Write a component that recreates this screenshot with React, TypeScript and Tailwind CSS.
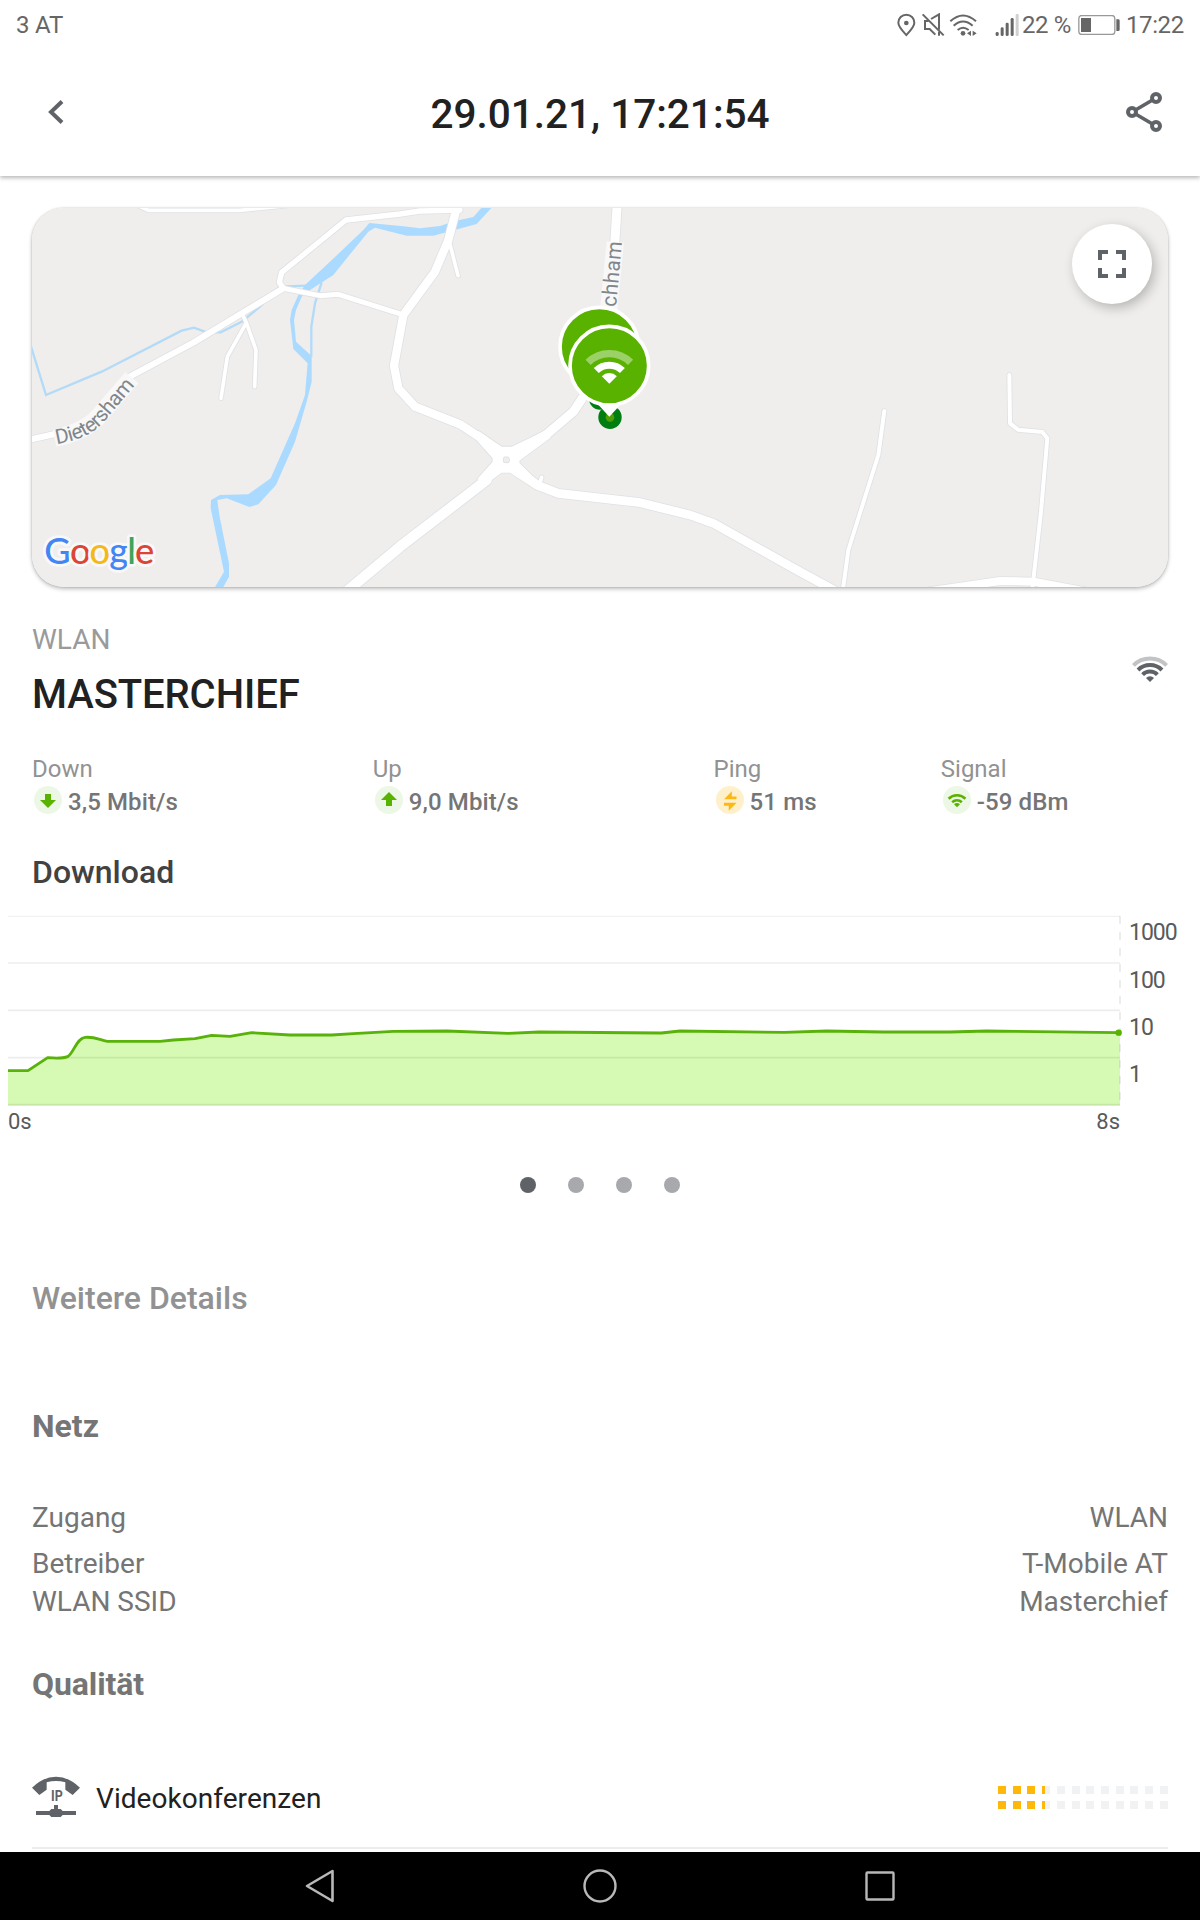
import React from "react";

const MAJOR = [
  { d: "M1315 20L1285 135L1245 230L1150 360L1122 512L1135 580L1185 635L1320 688L1395 737L1440 772", w: 25 },
  { d: "M1470 780L1580 718L1660 650L1700 590L1740 500L1770 380L1792 20", w: 27 },
  { d: "M1400 855L1140 1055L985 1185", w: 31 },
  { d: "M1485 820L1555 872L1615 895L1855 922L2010 960L2080 985L2340 1130L2450 1190", w: 26 },
  { d: "M20 736L105 717L205 690L325 547L520 443L790 280", w: 18 },
  { d: "M790 280L778 262L785 232L978 75L1140 57L1200 48L1320 45", w: 16 },
  { d: "M790 280L900 302L955 298L1145 358", w: 15 },
  { d: "M340 25L385 46L660 46L820 30", w: 11 },
  { d: "M2720 1190L2940 1158L3040 1160L3200 1190", w: 24 },
  { d: "M1288 140L1314 242", w: 11 },
  { d: "M668 360L680 385L708 465L704 575M678 385L622 485L603 610", w: 11 },
  { d: "M1558 868L1565 847", w: 11 },
  { d: "M2593 648L2575 780L2485 1065L2468 1190", w: 12 },
  { d: "M2968 540L2970 685L2994 704L3067 711L3082 730L3063 950L3036 1190", w: 12 },
];

const ROUNDABOUT =
  "M1375 707L1445 755L1475 755L1580 705L1592 728L1498 797L1499 805L1556 862L1545 882L1470 833L1445 833L1395 870L1372 852L1418 800L1418 790L1372 738Z";

const RIVER =
  "M1048 84L1150 94L1200 100L1260 93L1305 78L1360 66L1392 30L1422 30L1370 87L1240 122L1160 122L1065 98L1045 110L972 200L940 240L870 285L845 305L828 345L822 375L828 440L875 483L875 560L860 620L825 740L768 870L715 928L688 936L620 910L592 915L598 960L627 1105L627 1145L605 1185L580 1185L612 1130L572 940L573 915L600 900L685 898L752 850L825 685L855 600L863 505L820 462L810 375L815 345L835 300L855 270L925 205L1030 105Z";

const LABEL = "font-['Roboto',sans-serif] fill-[#80868b]";

function MapView() {
  return (
    <svg className="block h-full w-full" viewBox="36 39 3408 1137" preserveAspectRatio="none">
      <rect x="36" y="39" width="3408" height="1137" fill="#efeeec" />
      <g fill="none" stroke="#b3dbf8" strokeWidth="7">
        <path d="M30 445L78 600L245 530L485 407L522 398L560 412L602 412L665 380L720 335L780 275L860 272" />
        <path d="M905 262L885 325L874 395L874 485" />
      </g>
      <path d={RIVER} fill="#aadaff" />
      <g fill="none" stroke="#dfe1e4" strokeLinecap="round" strokeLinejoin="round">
        {MAJOR.map((r) => (
          <path key={r.d} d={r.d} strokeWidth={r.w + 5} />
        ))}
        <path d={ROUNDABOUT} strokeWidth="5" />
      </g>
      <g fill="none" stroke="#fff" strokeLinecap="round" strokeLinejoin="round">
        {MAJOR.map((r) => (
          <path key={r.d} d={r.d} strokeWidth={r.w} />
        ))}
      </g>
      <path d={ROUNDABOUT} fill="#fff" />
      <rect x="1450" y="786" width="18" height="17" rx="5" fill="#efeeec" stroke="#dfe1e4" strokeWidth="3" />

      <g fill="none" stroke="#f8f8f8" strokeWidth="52" strokeLinejoin="round">
        <path d="M104 730C150 720 200 704 236 664L336 548" />
        <path d="M1764 364L1786 141" />
      </g>
      <path id="dietersham" d="M110 747C165 738 215 722 252 680L390 518" fill="none" />
      <path id="schham" d="M1785 370L1808 118" fill="none" />
      <text className={LABEL} fontSize="62">
        <textPath href="#dietersham" textLength="304">Dietersham</textPath>
      </text>
      <text className={LABEL} fontSize="63">
        <textPath href="#schham" textLength="230">schham</textPath>
      </text>

      <circle cx="1740" cy="611" r="33" fill="#007e12" />
      <circle cx="1738" cy="455" r="118" fill="#59b200" stroke="#fff" strokeWidth="11" />
      <circle cx="1770" cy="667" r="35" fill="#007e12" />
      <circle cx="1770" cy="667" r="13" fill="#4fa007" />
      <path d="M1728 622L1768 665L1808 622Z" fill="#fff" />
      <circle cx="1768" cy="512" r="118" fill="#59b200" stroke="#fff" strokeWidth="11" />
      <g fill="none" stroke="#fff">
        <path d="M1704.4 502.4A90 90 0 0 1 1831.6 502.4" strokeWidth="22" opacity=".4" />
        <path d="M1728.8 526.8A55.5 55.5 0 0 1 1807.2 526.8" strokeWidth="21" />
      </g>
      <path d="M1768 566L1745.5 543.5A32 32 0 0 1 1790.5 543.5Z" fill="#fff" />

      <text
        x="73"
        y="1107"
        className="font-['Lato',sans-serif] stroke-[#f8f8f8] [paint-order:stroke] [stroke-linejoin:round]"
        fontSize="109"
        fontWeight="500"
        strokeWidth="17"
        textLength="330"
      >
        <tspan fill="#4285f4">G</tspan>
        <tspan fill="#db4437">o</tspan>
        <tspan fill="#f4b919">o</tspan>
        <tspan fill="#4285f4">g</tspan>
        <tspan fill="#3fa35b">l</tspan>
        <tspan fill="#db4437">e</tspan>
      </text>
    </svg>
  );
}

function StatusBar() {
  return (
    <div className="relative z-20 flex h-12 shrink-0 items-center justify-between bg-white px-4 pt-px text-2xl leading-[48px] text-[#666]">
      <span className="tracking-[-0.2px]">3 AT</span>
      <div className="flex items-center">
        <svg width="80" height="24" viewBox="50 36 240 72" fill="none" stroke="#666" strokeWidth="6">
          <path d="M78 102C66 89 54 77 54 65a24 24 0 0 1 48 0C102 77 90 89 78 102Z" />
          <circle cx="78" cy="66" r="7" fill="#666" stroke="none" />
          <path d="M127 40L190 103" />
          <path d="M145 60h-11v24h14l17 17M152 54L176 40v46M176 92v12" strokeWidth="6" />
          <path d="M210 61Q248 26 287 61M220 74Q248 49 277 74M232 87Q248 73 265 87" />
          <circle cx="248" cy="97" r="7" fill="#666" stroke="none" />
          <path d="M272 89v16l-12-8zM277 89v16l12-8z" fill="#666" stroke="none" />
        </svg>
        <svg className="ml-[18px]" width="24" height="22" viewBox="343 39 72 66" fill="#666">
          <rect x="345" y="93" width="9" height="12" rx="4" />
          <rect x="360" y="79" width="9" height="26" rx="4" />
          <rect x="375" y="65" width="9" height="40" rx="4" />
          <rect x="390" y="51" width="9" height="54" rx="4" />
          <rect x="405" y="39" width="9" height="66" rx="3" fill="#d0d0d0" />
        </svg>
        <span className="ml-[3px] w-[50px] whitespace-nowrap tracking-[-0.4px]">22 %</span>
        <svg className="ml-1.5" width="42" height="20" viewBox="593 42 126 60" fill="none">
          <rect x="595.5" y="43.5" width="108" height="57" rx="9" stroke="#999" strokeWidth="4" />
          <rect x="602" y="51" width="30" height="42" fill="#666" />
          <path d="M708 55h6a4 4 0 0 1 4 4v27a4 4 0 0 1-4 4h-6z" fill="#666" />
        </svg>
        <span className="ml-1.5 w-[58px] whitespace-nowrap tracking-[-0.4px]">17:22</span>
      </div>
    </div>
  );
}

function Header() {
  return (
    <header className="z-10 flex h-32 shrink-0 items-center justify-between bg-white pl-12 pr-[38px] shadow-[0_2px_4px_rgba(0,0,0,0.28)]">
      <svg width="16" height="24" viewBox="0 0 16 24" fill="none" stroke="#5f6368" strokeWidth="4">
        <path d="M14 1.5L3 12L14 22.5" />
      </svg>
      <h1 className="pl-[10px] pt-[4px] text-[40.500px] font-medium leading-[48px] text-[#212121]">29.01.21, 17:21:54</h1>
      <svg width="36" height="40" viewBox="0 0 36 40" fill="none" stroke="#5f6368" strokeWidth="4">
        <circle cx="6" cy="20" r="4" />
        <circle cx="30" cy="6" r="4" />
        <circle cx="30" cy="34" r="4" />
        <path d="M9.5 18L26.5 8M9.5 22L26.5 32" strokeWidth="3.6" />
      </svg>
    </header>
  );
}

function Bubble({ tone, children }: { tone: string; children: React.ReactNode }) {
  return (
    <svg className="shrink-0" width="28" height="28" viewBox="0 0 28 28">
      <circle cx="14" cy="14" r="14" fill={tone} />
      {children}
    </svg>
  );
}

const STATS = [
  {
    label: "Down",
    value: "3,5 Mbit/s",
    icon: (
      <Bubble tone="#edf7e5">
        <path d="M11 8h6v6h5l-8 8l-8-8h5z" fill="#59b200" />
      </Bubble>
    ),
  },
  {
    label: "Up",
    value: "9,0 Mbit/s",
    icon: (
      <Bubble tone="#edf7e5">
        <path d="M11 20h6v-6h5l-8-8l-8 8h5z" fill="#59b200" />
      </Bubble>
    ),
  },
  {
    label: "Ping",
    value: "51 ms",
    icon: (
      <Bubble tone="#fff0cc">
        <path d="M8 13.300L15.800 5.200V10.400H20.500V13.300ZM20.500 16.800L12.700 24.800V19.700H8V16.800Z" fill="#fdb813" />
      </Bubble>
    ),
  },
  {
    label: "Signal",
    value: "-59 dBm",
    icon: (
      <Bubble tone="#edf7e5">
        <g fill="none" stroke="#59b200" strokeWidth="2.600">
          <path d="M5.600 12.700A12 12 0 0 1 22.400 12.700" />
          <path d="M9.200 16.200A7 7 0 0 1 18.800 16.200" />
        </g>
        <path d="M14 21.300l-3-3a4.200 4.200 0 0 1 6 0z" fill="#59b200" />
      </Bubble>
    ),
  },
];

function Stats() {
  return (
    <div className="mt-[30px] grid grid-cols-[3fr_3fr_2fr_2fr]">
      {STATS.map((s) => (
        <div key={s.label}>
          <div className="h-8 text-2xl leading-[34px] text-[#929292]">{s.label}</div>
          <div className="flex h-8 items-center gap-1.5 pl-0.5">
            {s.icon}
            <span className="pt-[3px] text-2xl font-medium leading-8 tracking-[0.1px] text-[#757575]">{s.value}</span>
          </div>
        </div>
      ))}
    </div>
  );
}

const CURVE =
  "M24 512H84L143 473Q185 477 203 470C222 458 230 414 255 412C285 409 300 421 322 424H480L520 420L585 416L635 406L690 409L755 398L870 405H995L1060 401L1180 394L1341 393L1525 400L1617 396L1984 399L2040 393L2352 397L2480 393L2650 396H2850L2960 393L3355 398";

function Chart() {
  return (
    <section className="mt-4 px-2">
      <div className="flex gap-[7px]">
        <svg className="mt-[7px] block" width="1114" height="191" viewBox="24 45 3342 573">
          <path d={CURVE + "L3360 398V617H24Z"} fill="#d6f9b3" />
          <g fill="none" stroke="#000" strokeOpacity=".07">
            <path d="M24 49H3360" strokeWidth="3" />
            <path d="M24 189H3360M24 331H3360M24 473H3360M24 614H3360" strokeWidth="5" />
            <path d="M3360 48V612" strokeWidth="6" strokeDasharray="24 24" />
          </g>
          <path d={CURVE} fill="none" stroke="#58b20a" strokeWidth="8.500" strokeLinejoin="round" />
          <circle cx="3356" cy="398" r="9.500" fill="#59b200" />
        </svg>
        <div className="pt-0.5 text-[23px] text-[#5a5a5a]">
          {["1000", "100", "10", "1"].map((t) => (
            <div key={t} className="flex h-[47.300px] items-center tracking-[-1px]">
              {t}
            </div>
          ))}
        </div>
      </div>
      <div className="flex h-7 w-[1112px] items-center justify-between pt-[3px] text-[22px] text-[#5a5a5a]">
        <span>0s</span>
        <span>8s</span>
      </div>
    </section>
  );
}

function Row({ name, value }: { name: string; value: string }) {
  return (
    <div className="flex h-[38px] items-center justify-between text-[28px] leading-[38px] text-[#757575]">
      <span>{name}</span>
      <span>{value}</span>
    </div>
  );
}

function Rating() {
  const cells = Array.from({ length: 12 }, (_, i) => i);
  return (
    <div className="flex w-[170px] flex-col gap-[7px]">
      {[0, 1].map((r) => (
        <div key={r} className="flex justify-between">
          {cells.map((i) => (
            <div key={i} className={i < 3 ? "h-2 w-2 bg-[#ffb80a]" : "flex h-2 w-2 bg-[#f1f2f4]"}>
              {i === 3 && <div className="h-2 w-[3px] bg-[#ffb80a]" />}
            </div>
          ))}
        </div>
      ))}
    </div>
  );
}

export default function App() {
  return (
    <div className="flex h-[1920px] w-[1200px] flex-col overflow-hidden bg-white font-['Roboto',sans-serif]">
      <StatusBar />
      <Header />
      <main className="flex min-h-0 flex-1 flex-col overflow-hidden">
        <div className="px-8 pt-8">
          <div className="relative h-[379px] rounded-[32px] shadow-[0_2px_4px_rgba(0,0,0,0.26),0_0_2px_rgba(0,0,0,0.2)]">
            <div className="h-full overflow-hidden rounded-[32px]">
              <MapView />
            </div>
            <button className="absolute right-4 top-4 flex h-20 w-20 items-center justify-center rounded-full bg-white shadow-[3px_4px_12px_rgba(0,0,0,0.24)]">
              <svg width="28" height="28" viewBox="0 0 28 28" fill="none" stroke="#5f6368" strokeWidth="4">
                <path d="M2 10V2H10M18 2H26V10M26 18V26H18M10 26H2V18" />
              </svg>
            </button>
          </div>

          <div className="mt-8 flex justify-between">
            <div>
              <div className="h-10 text-[28px] leading-[42px] text-[#9a9a9a]">WLAN</div>
              <h2 className="mt-[7px] h-14 text-[40px] font-medium leading-[58px] tracking-[-0.1px] text-[#212121]">MASTERCHIEF</h2>
            </div>
            <svg className="mt-[37px]" width="36" height="26" viewBox="0 0 36 26" fill="none" stroke="#5f6368" strokeWidth="4">
              <path d="M1.400 9.400A23.500 23.500 0 0 1 34.600 9.400" stroke="#c2c3c5" />
              <path d="M6 14A17 17 0 0 1 30 14" />
              <path d="M10.600 18.600A10.500 10.500 0 0 1 25.400 18.600" />
              <path d="M18 26l-4-4a5.700 5.700 0 0 1 8 0z" fill="#5f6368" stroke="none" />
            </svg>
          </div>
          <Stats />
          <h3 className="mt-9 h-10 text-[32px] font-medium leading-10 text-[#424242]">Download</h3>
        </div>
        <Chart />
        <div className="mt-[43px] flex justify-center gap-8">
          <span className="h-4 w-4 rounded-full bg-[#5f6368]" />
          <span className="h-4 w-4 rounded-full bg-[#a8a9ac]" />
          <span className="h-4 w-4 rounded-full bg-[#a8a9ac]" />
          <span className="h-4 w-4 rounded-full bg-[#a8a9ac]" />
        </div>
        <div className="px-8">
          <h3 className="mt-[85px] h-10 text-[32px] font-medium leading-10 text-[#929292]">Weitere Details</h3>
          <h3 className="mt-[88px] h-10 text-[32px] font-bold leading-10 text-[#757575]">Netz</h3>
          <div className="mt-[53px]">
            <Row name="Zugang" value="WLAN" />
          </div>
          <div className="mt-2">
            <Row name="Betreiber" value="T-Mobile AT" />
            <Row name="WLAN SSID" value="Masterchief" />
          </div>
          <h3 className="mt-[43px] h-10 text-[32px] font-bold leading-10 tracking-[-0.1px] text-[#757575]">Qualität</h3>
          <div className="mt-[73px] flex h-10 items-center justify-between">
            <div className="flex items-center gap-4">
              <svg width="48" height="42" viewBox="96 108 144 126" fill="#5f6368">
                <path d="M96 143Q131 110 168 110T240 143L218 165L196 149V127Q168 119 140 127V149L118 165Z" />
                <path d="M108 213H148L154 207H162V195H174V207H182L188 213H228V225H188L182 231H154L148 225H108Z" />
                <text x="153" y="183" fontSize="42" fontWeight="700" textLength="35" lengthAdjust="spacingAndGlyphs">
                  IP
                </text>
              </svg>
              <span className="pt-1 text-[28px] leading-10 tracking-[0.05px] text-[#212121]">Videokonferenzen</span>
            </div>
            <Rating />
          </div>
          <div className="mt-[30px] h-0.5 bg-[#ececec]" />
        </div>
      </main>
      <nav className="h-[68px] shrink-0 bg-black">
        <div className="grid h-full grid-cols-3 items-center justify-items-center px-[180px]">
          <svg width="30" height="34" viewBox="0 0 30 34" fill="none" stroke="#b8b8b8" strokeWidth="2.600" strokeLinejoin="round">
            <path d="M2 17L27.500 2V32Z" />
          </svg>
          <svg width="34" height="34" viewBox="0 0 34 34" fill="none" stroke="#b8b8b8" strokeWidth="2.400">
            <circle cx="17" cy="17" r="15.500" />
          </svg>
          <svg width="30" height="30" viewBox="0 0 30 30" fill="none" stroke="#b8b8b8" strokeWidth="2.400">
            <rect x="1.500" y="1.500" width="27" height="27" rx="1" />
          </svg>
        </div>
      </nav>
    </div>
  );
}
